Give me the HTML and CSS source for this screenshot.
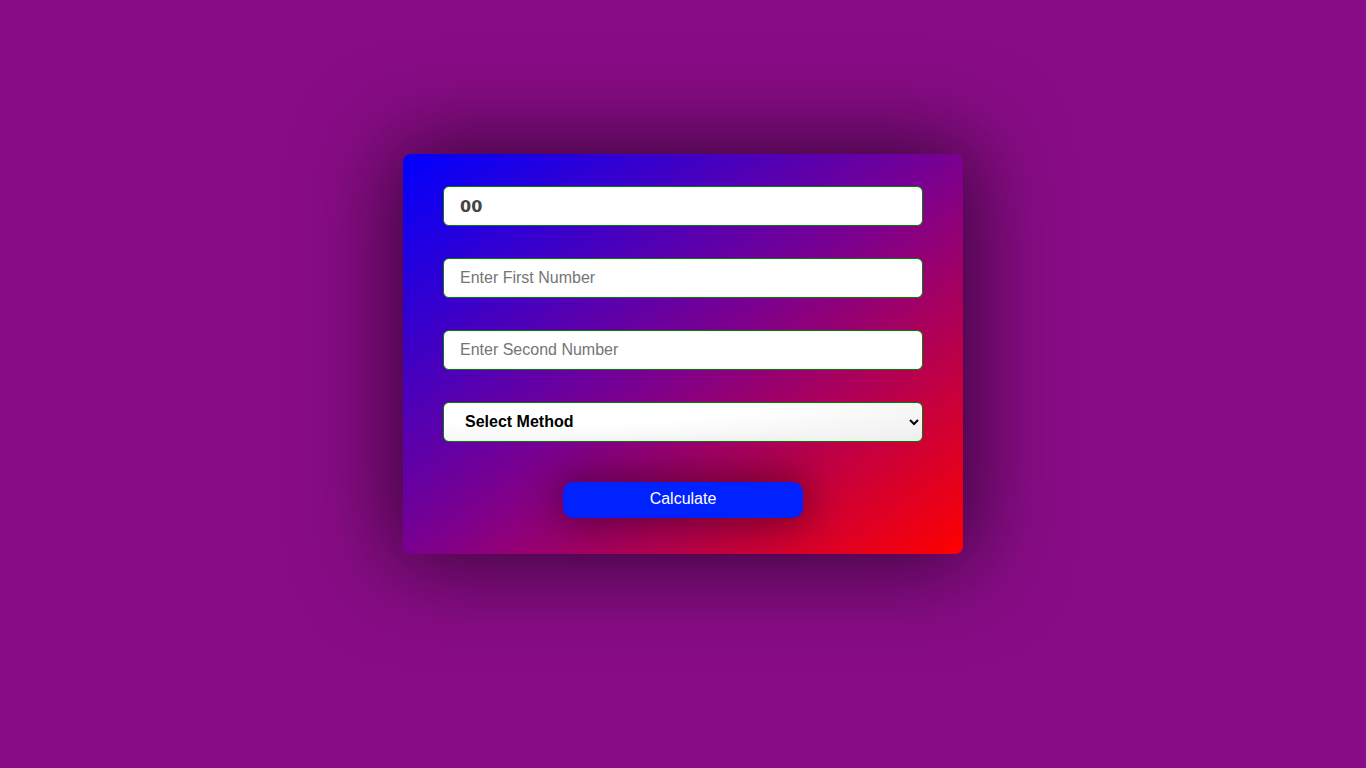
FILE: index.html
```html
<!DOCTYPE html>
<html>
<head>
<meta charset="utf-8">
<link rel="stylesheet" href="styles.css">
</head>
<body>
<div class="page">
  <form class="card">
    <input class="field result" type="text" value="00" readonly>
    <input class="field" type="text" placeholder="Enter First Number">
    <input class="field" type="text" placeholder="Enter Second Number">
    <select class="field method">
      <option>Select Method</option>
      <option>Add</option>
      <option>Subtract</option>
    </select>
    <button class="calc" type="button">Calculate</button>
  </form>
</div>
</body>
</html>
```
FILE: styles.css
```css
html, body {
  margin: 0;
  padding: 0;
  height: 100%;
}
body {
  background: #880c86;
  font-family: "Liberation Sans", Arial, sans-serif;
}
.page {
  height: 768px;
  display: flex;
  justify-content: center;
  padding-top: 154px;
  box-sizing: border-box;
}
.card {
  width: 560px;
  height: 400px;
  box-sizing: border-box;
  padding: 32px 40px;
  border-radius: 8px;
  background: linear-gradient(to bottom right, #0000ff 0%, #7a0090 50%, #ff0000 100%);
  box-shadow: 0 0 90px 10px rgba(0, 0, 0, 0.6);
  display: flex;
  flex-direction: column;
  align-items: center;
  gap: 32px;
}
.field {
  width: 480px;
  height: 40px;
  box-sizing: border-box;
  border: 1px solid #008000;
  border-radius: 6px;
  background: #fff;
  padding: 0 16px;
  font-family: "Liberation Sans", Arial, sans-serif;
  font-size: 16px;
  color: #333;
  outline: none;
}
.field::placeholder {
  color: #757575;
}
.result {
  font-family: "DejaVu Sans", Verdana, sans-serif;
  font-weight: bold;
  font-size: 16px;
  color: #444;
}
.method {
  font-weight: bold;
  color: #000;
  padding: 0 16px 2px 17px;
  background: radial-gradient(ellipse at 20% 0%, #ffffff 40%, #eeeeee 100%);
}
.calc {
  margin-top: 8px;
  width: 240px;
  height: 36px;
  border: none;
  border-radius: 10px;
  background: #0022ff;
  color: #fff;
  font-family: "Liberation Sans", Arial, sans-serif;
  font-size: 16px;
  padding: 0 0 2px;
  box-shadow: 0 0 40px 4px rgba(0, 0, 0, 0.45);
}
```
